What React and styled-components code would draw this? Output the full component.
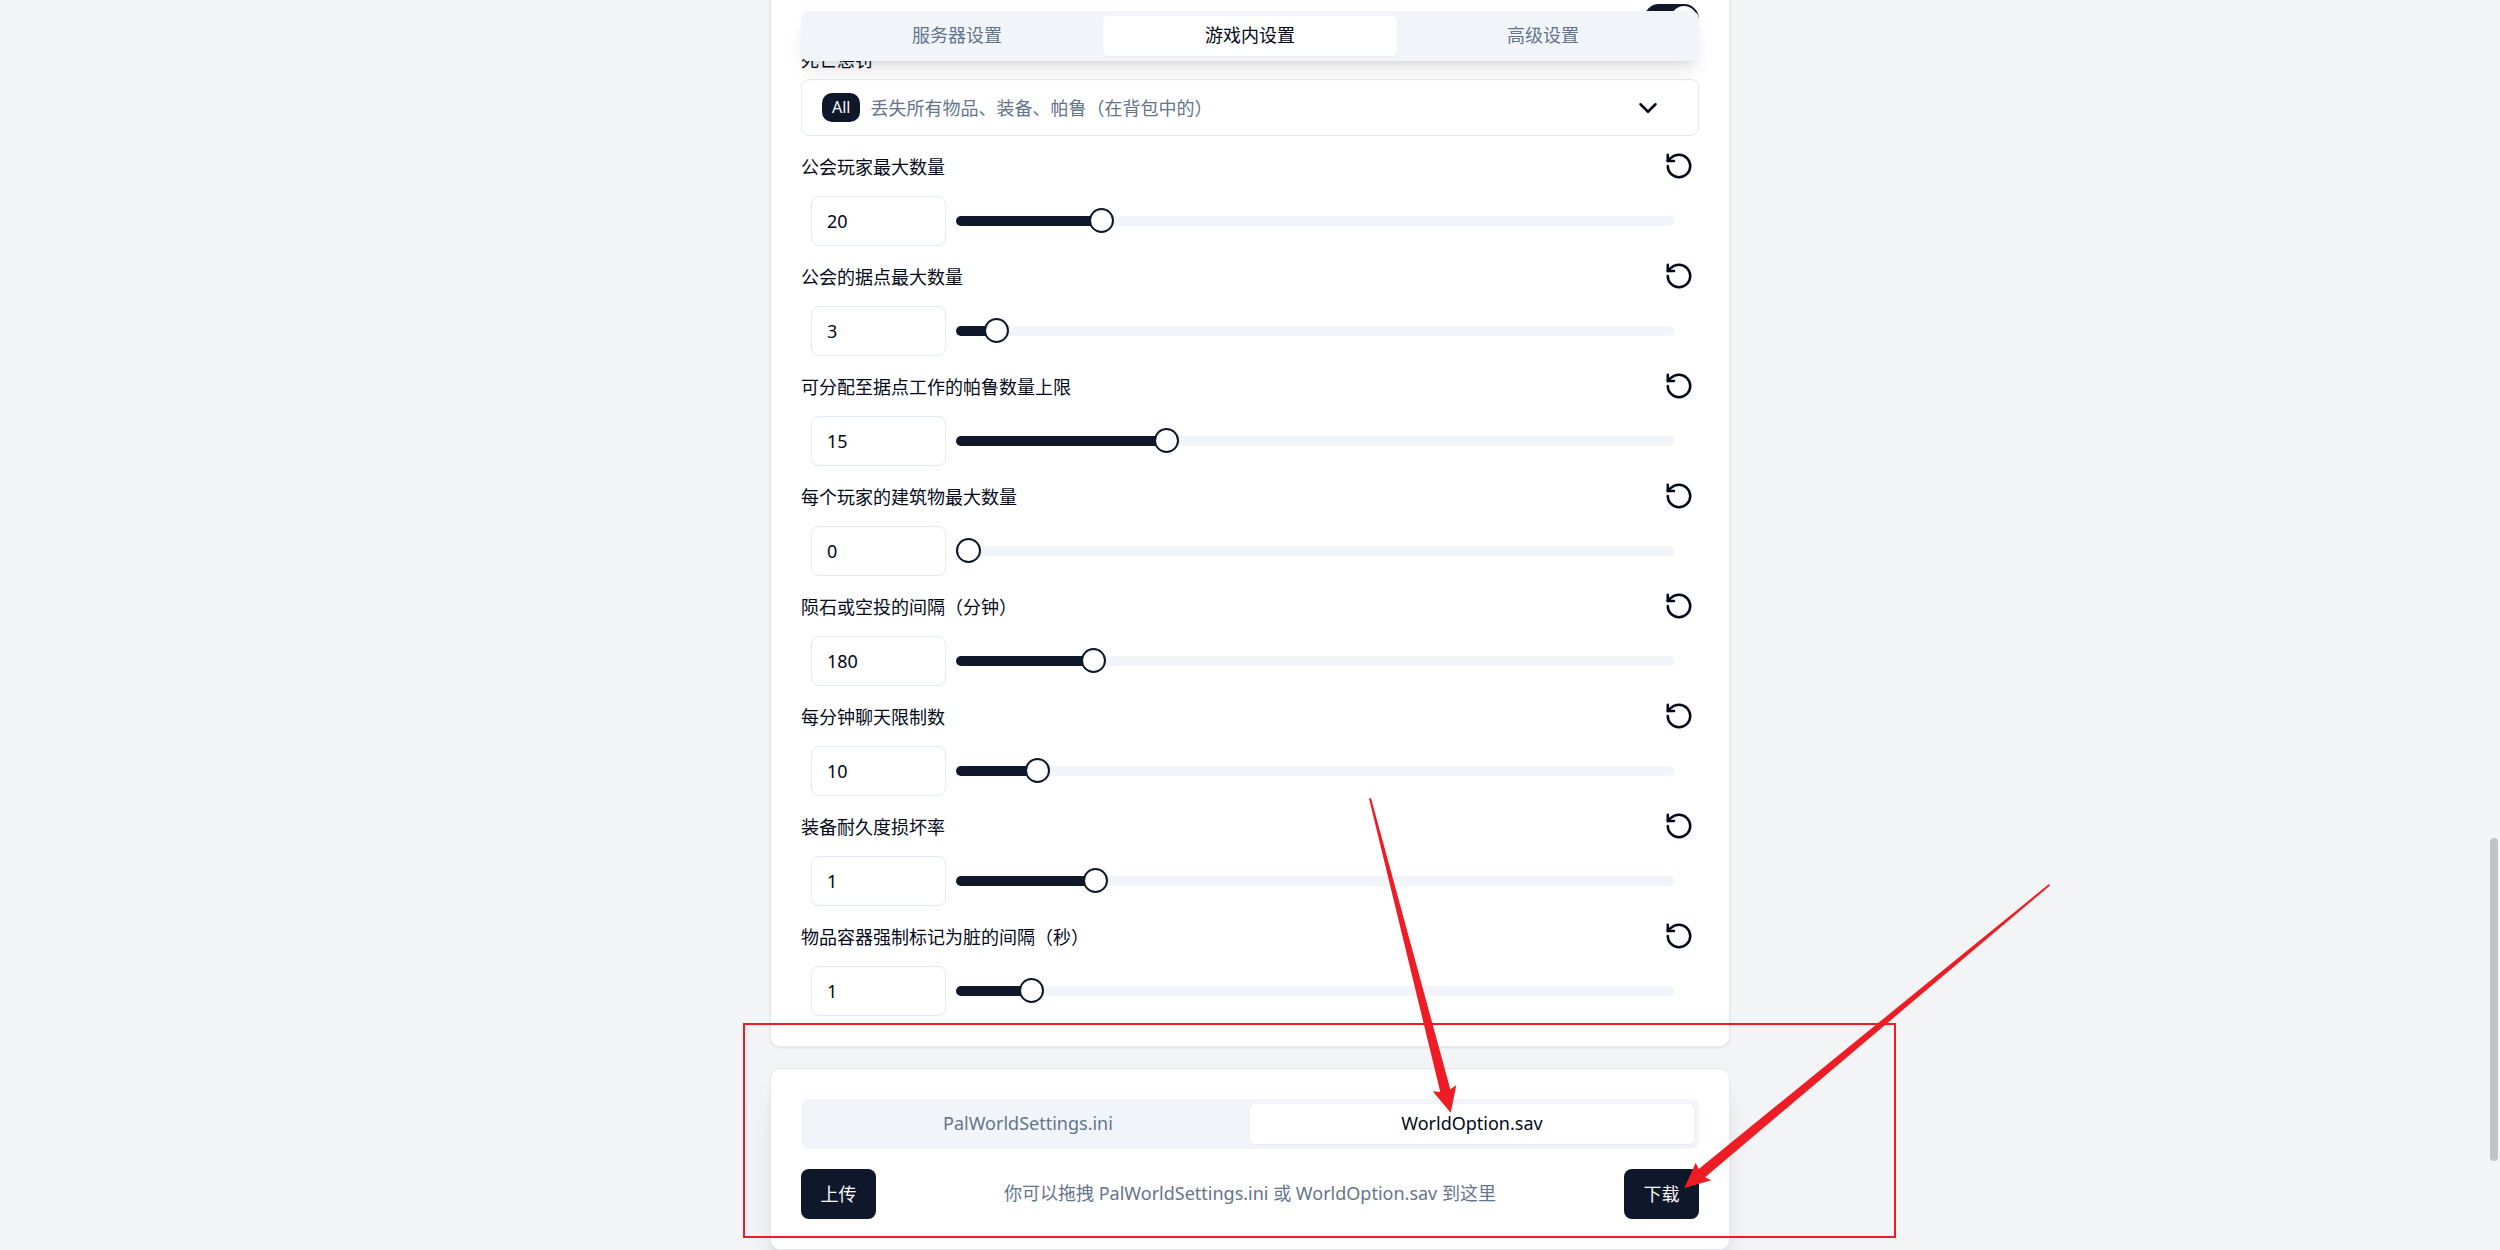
import React, { useState } from "react";
import styled, { createGlobalStyle } from "styled-components";
import { ChevronDown, RotateCcw } from "lucide-react";

const ink = "#020817";
const navy = "#0f172a";
const muted = "#64748b";
const line = "#e2e8f0";
const wash = "#f1f5f9";
const red = "#ee1c25";

const GlobalStyle = createGlobalStyle`
  *, *::before, *::after { box-sizing: border-box; }
  body {
    margin: 0;
    background: #f3f4f6;
    color: ${ink};
    font-family: "Noto Sans", "Noto Sans CJK SC", sans-serif;
    font-size: 18px;
    line-height: 20px;
  }
  button, input { font: inherit; color: inherit; margin: 0; }
`;

const Column = styled.main`
  position: relative;
  display: flex;
  flex-direction: column;
  gap: 21px;
  max-width: 960px;
  margin: 0 auto;
`;

const Card = styled.section`
  position: relative;
  display: flex;
  flex-direction: column;
  background: #fff;
  border: 1px solid ${line};
`;

const SettingsCard = styled(Card)`
  gap: 15px;
  padding: 4px 30px 30px;
  border-top: 0;
  border-radius: 0 0 10px 10px;
  box-shadow: 0 1px 3px rgba(0, 0, 0, 0.08);
`;

const FileCard = styled(Card)`
  gap: 20px;
  padding: 30px;
  border-radius: 10px;
  box-shadow: 0 25px 31px -6px rgba(0, 0, 0, 0.1), 0 10px 13px -7px rgba(0, 0, 0, 0.1);
`;

const TabList = styled.div`
  display: flex;
  justify-content: center;
  padding: 5px;
  height: 50px;
  border-radius: 8px;
  background: ${wash};
`;

const FloatingTabList = styled(TabList)`
  position: absolute;
  z-index: 2;
  top: 11px;
  left: 30px;
  right: 30px;
  box-shadow: 0 13px 19px -4px rgba(0, 0, 0, 0.1), 0 5px 8px -5px rgba(0, 0, 0, 0.1);
`;

const Tab = styled.button`
  width: ${(p) => p.$width};
  padding: 0 15px 2px;
  border: 0;
  border-radius: 5px;
  background: ${(p) => (p.$active ? "#fff" : "transparent")};
  color: ${(p) => (p.$active ? ink : muted)};
  box-shadow: ${(p) => (p.$active ? "0 1px 3px rgba(0, 0, 0, 0.05)" : "none")};
`;

const SwitchRow = styled.div`
  display: flex;
  justify-content: flex-end;
`;

const Switch = styled.input`
  appearance: none;
  display: block;
  width: 55px;
  height: 30px;
  border-radius: 15px;
  background: ${(p) => (p.checked ? navy : line)};
  padding: 2px;
  &::before {
    content: "";
    display: block;
    width: 26px;
    height: 26px;
    border-radius: 50%;
    margin-left: ${(p) => (p.checked ? "25px" : "0")};
    background: #fff;
  }
`;

const Field = styled.div`
  display: flex;
  flex-direction: column;
  gap: ${(p) => p.$gap || 15}px;
`;

const FieldHead = styled.div`
  display: flex;
  align-items: center;
  justify-content: space-between;
  height: 30px;
  padding-right: 5px;
`;

const Label = styled.label`
  line-height: 18px;
  padding-top: 2px;
`;

const IconButton = styled.button`
  display: flex;
  padding: 0;
  border: 0;
  background: none;
  color: ${ink};
`;

const Picker = styled.button`
  display: flex;
  align-items: center;
  gap: 10px;
  height: 57px;
  padding: 0 35px 0 20px;
  border: 1px solid ${line};
  border-radius: 8px;
  background: none;
  color: ${muted};
  text-align: left;
  svg { margin-left: auto; color: ${ink}; }
`;

const Badge = styled.span`
  padding: 4px 10px 5px;
  border-radius: 10px;
  background: ${navy};
  color: #f8fafc;
  font-size: 16px;
`;

const FieldBody = styled.div`
  display: flex;
  align-items: center;
  gap: 10px;
  padding: 0 25px 0 10px;
`;

const NumberBox = styled.input`
  appearance: textfield;
  width: 135px;
  height: 50px;
  padding: 0 15px;
  border: 1px solid ${line};
  border-radius: 8px;
  background: #fff;
  &::-webkit-inner-spin-button { appearance: none; margin: 0; }
`;

const Range = styled.input`
  appearance: none;
  flex: 1;
  min-width: 0;
  height: 26px;
  background: none;
  &::-webkit-slider-runnable-track {
    height: 10px;
    border-radius: 5px;
    background: linear-gradient(to right, ${navy} var(--fill), ${wash} var(--fill));
  }
  &::-webkit-slider-thumb {
    appearance: none;
    width: 25px;
    height: 25px;
    margin-top: -8px;
    border: 2px solid ${navy};
    border-radius: 50%;
    background: #fff;
  }
`;

const Actions = styled.div`
  display: flex;
  align-items: center;
  justify-content: space-between;
`;

const Button = styled.button`
  height: 50px;
  min-width: 75px;
  padding: 0 19px;
  border: 0;
  border-radius: 8px;
  background: ${navy};
  color: #f8fafc;
`;

const Hint = styled.p`
  margin: 0;
  padding-bottom: 2px;
  color: ${muted};
`;

const Markup = styled.svg`
  position: absolute;
  z-index: 3;
  top: 0;
  left: 0;
  width: 100%;
  height: 100%;
  overflow: visible;
  pointer-events: none;
`;

const ScrollThumb = styled.div`
  position: fixed;
  right: 2px;
  top: 838px;
  width: 8px;
  height: 323px;
  border-radius: 4px;
  background: #c2c3c5;
`;

const settings = [
  { id: "guild-players", label: "公会玩家最大数量", value: 20, min: 1, max: 100, step: 1 },
  { id: "guild-bases", label: "公会的据点最大数量", value: 3, min: 1, max: 50, step: 1 },
  { id: "base-workers", label: "可分配至据点工作的帕鲁数量上限", value: 15, min: 1, max: 50, step: 1 },
  { id: "buildings", label: "每个玩家的建筑物最大数量", value: 0, min: 0, max: 1000, step: 1 },
  { id: "drops", label: "陨石或空投的间隔（分钟）", value: 180, min: 0, max: 1000, step: 1 },
  { id: "chat", label: "每分钟聊天限制数", value: 10, min: 0, max: 100, step: 1 },
  { id: "durability", label: "装备耐久度损坏率", value: 1, min: 0.1, max: 5, step: 0.1 },
  { id: "dirty", label: "物品容器强制标记为脏的间隔（秒）", value: 1, min: 0.1, max: 10, step: 0.1 },
];

function SliderField({ id, label, value: initial, min, max, step }) {
  const [value, setValue] = useState(initial);
  const share = Math.min(1, Math.max(0, (value - min) / (max - min)));
  const change = (e) => setValue(Number(e.target.value));
  return (
    <Field>
      <FieldHead>
        <Label htmlFor={id}>{label}</Label>
        <IconButton type="button" aria-label="重置" onClick={() => setValue(initial)}>
          <RotateCcw size={30} />
        </IconButton>
      </FieldHead>
      <FieldBody>
        <NumberBox id={id} type="number" value={value} min={min} max={max} step={step} onChange={change} />
        <Range
          type="range"
          aria-label={label}
          value={value}
          min={min}
          max={max}
          step={step}
          onChange={change}
          style={{ "--fill": `calc(12px + (100% - 25px) * ${share})` }}
        />
      </FieldBody>
    </Field>
  );
}

function Tabs({ as: List = TabList, items, initial, width }) {
  const [active, setActive] = useState(initial);
  return (
    <List role="tablist">
      {items.map((name) => (
        <Tab
          key={name}
          type="button"
          role="tab"
          aria-selected={name === active}
          $active={name === active}
          $width={width}
          onClick={() => setActive(name)}
        >
          {name}
        </Tab>
      ))}
    </List>
  );
}

export default function App() {
  const [on, setOn] = useState(true);
  return (
    <>
      <GlobalStyle />
      <Column>
        <SettingsCard>
          <Tabs
            as={FloatingTabList}
            items={["服务器设置", "游戏内设置", "高级设置"]}
            initial="游戏内设置"
            width="33%"
          />
          <SwitchRow>
            <Switch type="checkbox" role="switch" aria-label="开关" checked={on} onChange={() => setOn(!on)} />
          </SwitchRow>
          <Field $gap={10}>
            <Label htmlFor="death-penalty">死亡惩罚</Label>
            <Picker id="death-penalty" type="button">
              <Badge>All</Badge>
              丢失所有物品、装备、帕鲁（在背包中的）
              <ChevronDown size={30} />
            </Picker>
          </Field>
          {settings.map((s) => (
            <SliderField key={s.id} {...s} />
          ))}
        </SettingsCard>
        <FileCard>
          <Tabs items={["PalWorldSettings.ini", "WorldOption.sav"]} initial="WorldOption.sav" width="50%" />
          <Actions>
            <Button type="button">上传</Button>
            <Hint>你可以拖拽 PalWorldSettings.ini 或 WorldOption.sav 到这里</Hint>
            <Button type="button">下载</Button>
          </Actions>
        </FileCard>
        <Markup aria-hidden="true">
          <rect x="-26" y="1024" width="1151" height="213" fill="none" stroke={red} strokeWidth="2" />
          <path fill={red} d="M599 798.5L601 798L680.3 1089.3L686.3 1085.3L680.7 1112.7L662.7 1091.3L670.3 1092Z" />
          <path fill={red} d="M1279 884L1280 885.5L935 1177.3L941.3 1180.3L914.3 1188L925.7 1162.7L928.7 1169Z" />
        </Markup>
      </Column>
      <ScrollThumb aria-hidden="true" />
    </>
  );
}
